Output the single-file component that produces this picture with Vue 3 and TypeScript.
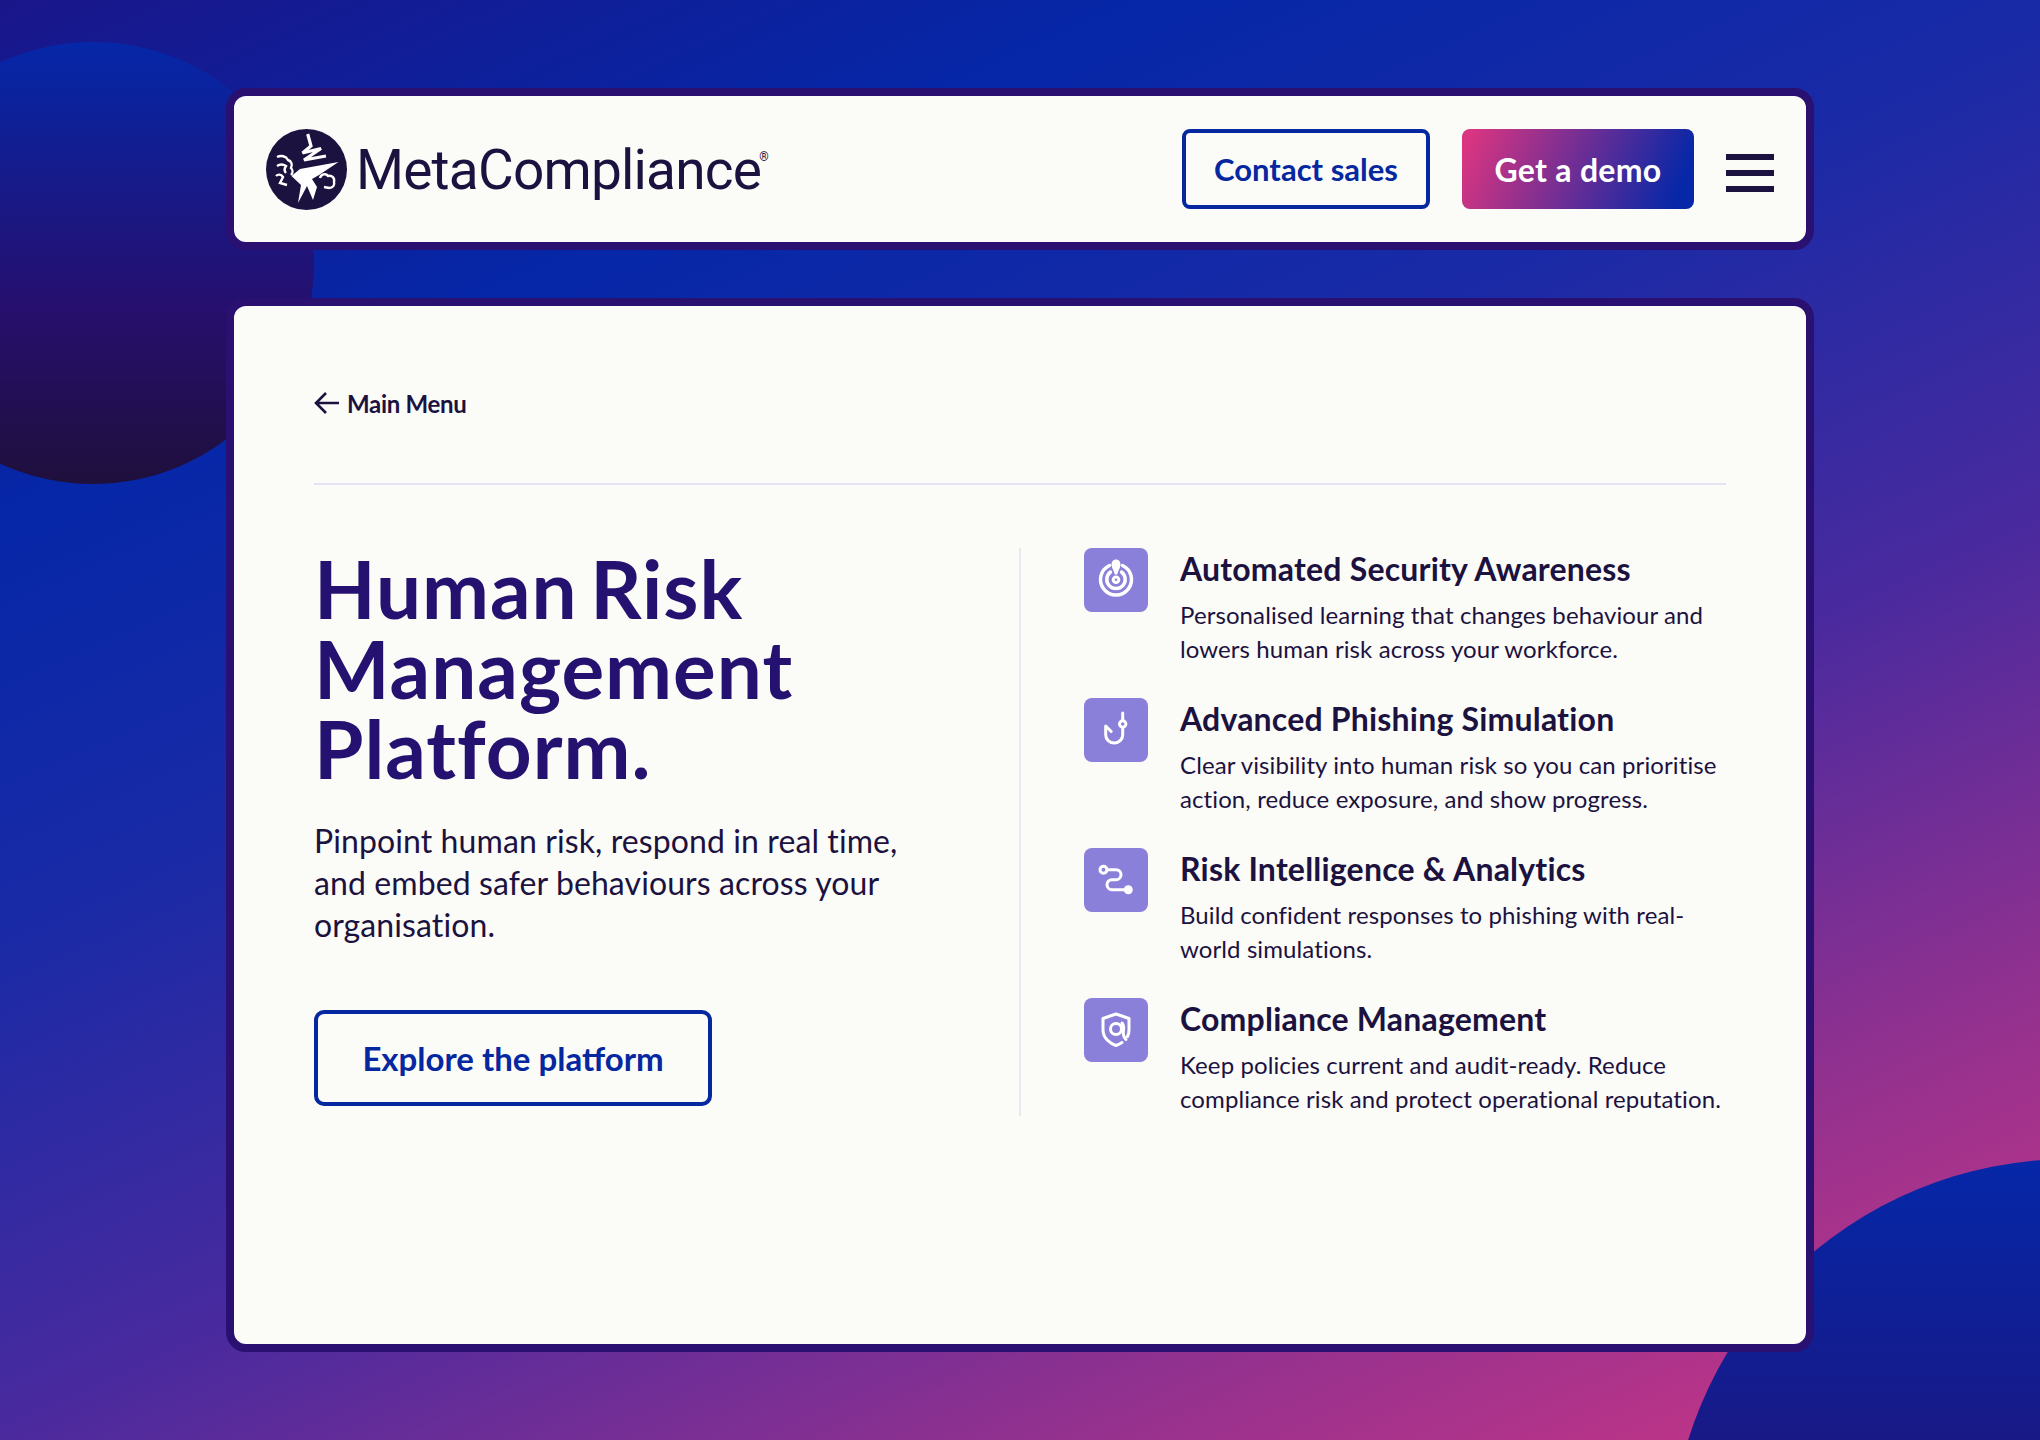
<script setup lang="ts">
interface Feature {
  icon: string;
  title: string;
  text: string;
}

const features: Feature[] = [
  {
    icon: "target",
    title: "Automated Security Awareness",
    text: "Personalised learning that changes behaviour and lowers human risk across your workforce.",
  },
  {
    icon: "hook",
    title: "Advanced Phishing Simulation",
    text: "Clear visibility into human risk so you can prioritise action, reduce exposure, and show progress.",
  },
  {
    icon: "route",
    title: "Risk Intelligence & Analytics",
    text: "Build confident responses to phishing with real-world simulations.",
  },
  {
    icon: "shield",
    title: "Compliance Management",
    text: "Keep policies current and audit-ready. Reduce compliance risk and protect operational reputation.",
  },
];
</script>

<template>
  <div class="page">
    <div class="blob blob-left"></div>
    <div class="blob blob-right"></div>

    <header class="card topbar">
      <div class="logo">
        <svg class="logo-mark" viewBox="0 0 81 81" width="81" height="81">
          <circle cx="40.500" cy="40.500" r="40.500" fill="#1c1240" />
          <path fill="none" stroke="#fff" stroke-width="3.200" d="M41.700 5 45 17 36.500 24 55 19.500 38 31 60 27" />
          <path fill="#fff" d="M72.500 33 34 40 25.500 47 35 56 32 74 41 57 47 71 51 58 46 50 53 46Z" />
          <path
            fill="none"
            stroke="#fff"
            stroke-width="2.400"
            d="M11 28c4-2 9-1 11 3 3 1 5 4 3 8 2 2 2 5 0 7M11 37c3-2 6-2 9 0-2 3-2 5 0 7M10 47c2-2 5-2 7 1l-3 6 7 2M54 49c1-4 6-5 8-2 4-1 7 2 6 6 1 3-1 6-5 6l-5-1"
          />
        </svg>
        <span class="logo-name">MetaCompliance<sup>®</sup></span>
      </div>
      <div class="actions">
        <a class="btn btn-outline btn-contact">Contact sales</a>
        <a class="btn btn-fill">Get a demo</a>
        <div class="burger"><span></span><span></span><span></span></div>
      </div>
    </header>

    <main class="card panel">
      <div class="back">
        <svg viewBox="0 0 26 24" width="26" height="24" fill="none" stroke="#1c1240" stroke-width="2.600">
          <path d="M25 12H2M12 2 2 12l10 10" />
        </svg>
        <span>Main Menu</span>
      </div>

      <div class="columns">
        <section class="intro">
          <h1>Human Risk<br />Management<br />Platform.</h1>
          <p>
            Pinpoint human risk, respond in real time,<br />
            and embed safer behaviours across your<br />
            organisation.
          </p>
          <a class="btn btn-outline btn-explore">Explore the platform</a>
        </section>

        <section class="features">
          <article v-for="item in features" :key="item.icon" class="feature">
            <div class="feature-icon">
              <svg viewBox="0 0 64 64" width="64" height="64" fill="none" stroke="#fff" stroke-width="3" stroke-linecap="round" stroke-linejoin="round">
                <template v-if="item.icon === 'target'">
                  <path d="M25.500 17.500a15.500 15.500 0 1 0 13 0" stroke-width="3.500" />
                  <path d="M26.500 24a9.200 9.200 0 1 0 11 0" stroke-width="3.500" />
                  <circle cx="32" cy="31.700" r="2.800" />
                  <path d="M32 11.500c2.800 0 4.500 2.200 4.500 5 0 3.500-2.500 6-3.300 10h-2.400c-.8-4-3.300-6.500-3.300-10 0-2.800 1.700-5 4.500-5Z" fill="#fff" stroke="none" />
                </template>
                <template v-else-if="item.icon === 'hook'">
                  <path d="M38.700 15V37a8.500 8 0 0 1-17 0v-9l5.500 5.500" />
                  <circle cx="38.700" cy="26" r="3.200" fill="#8b80d9" />
                </template>
                <template v-else-if="item.icon === 'route'">
                  <circle cx="19.500" cy="21.700" r="3.500" />
                  <path d="M23 21.700h9a5 5 0 0 1 0 10h-4a5 5 0 0 0 0 10h12" />
                  <circle cx="44.300" cy="41.700" r="4.500" fill="#fff" stroke="none" />
                </template>
                <template v-else>
                  <path d="M38 44.500c-2 1.300-4 2.300-6 3-6-2-13-7.500-13-15.500V20.500L32 16l13 4.500V32c0 2.500-.5 4.500-1.500 6.500" />
                  <circle cx="32" cy="31" r="5.500" />
                  <path d="M38 25c1.500 2 2 4 1.500 7s-1 6 2.500 9.500" />
                </template>
              </svg>
            </div>
            <div class="feature-body">
              <h3>{{ item.title }}</h3>
              <p>{{ item.text }}</p>
            </div>
          </article>
        </section>
      </div>
    </main>
  </div>
</template>

<style scoped>
.page {
  position: relative;
  width: 2040px;
  height: 1440px;
  overflow: hidden;
  box-sizing: border-box;
  padding-top: 88px;
  display: flex;
  flex-direction: column;
  align-items: center;
  gap: 48px;
  font-family: Lato, "Noto Sans", sans-serif;
  color: #1c1240;
  background: linear-gradient(156deg, #1a168a 0%, #0527a8 22%, #1a2aa6 40%, #4a2a9e 61%, #93318f 81%, #d03684 100%);
}

.blob {
  position: absolute;
  border-radius: 50%;
  background: linear-gradient(180deg, #0527a8 0%, #260f6e 60%, #1f0f3c 100%);
}

.blob-left {
  left: -128px;
  top: 42px;
  width: 442px;
  height: 442px;
}

.blob-right {
  left: 1670px;
  top: 1159px;
  width: 800px;
  height: 800px;
}

.card {
  position: relative;
  width: 1588px;
  box-sizing: border-box;
  background: #fbfbf8;
  border: 8px solid #2a1070;
  border-radius: 20px;
}

.topbar {
  height: 162px;
  padding: 0 32px;
  display: flex;
  align-items: center;
  justify-content: space-between;
}

.logo {
  display: flex;
  align-items: center;
  gap: 9px;
}

.logo-name {
  font-family: Roboto, sans-serif;
  font-size: 55px;
  line-height: 1;
  color: #1c1240;
  letter-spacing: -0.8px;
  margin-top: 3px;
}

.logo-name sup {
  font-size: 12px;
  vertical-align: 28px;
  line-height: 0;
  letter-spacing: 0;
  margin-left: -2px;
}

.actions {
  display: flex;
  align-items: center;
  gap: 32px;
}

.btn {
  box-sizing: border-box;
  display: flex;
  align-items: center;
  justify-content: center;
  font-weight: 700;
  border-radius: 8px;
}

.btn-outline {
  border: 4px solid #0527a0;
  color: #0527a0;
}

.btn-contact {
  width: 248px;
  height: 80px;
  font-size: 31px;
}

.btn-fill {
  width: 232px;
  height: 80px;
  font-size: 32px;
  letter-spacing: 0.3px;
  color: #fff;
  background: linear-gradient(112deg, #d93581 4%, #0527a8 92%);
}

.burger {
  width: 48px;
  display: flex;
  flex-direction: column;
  gap: 10px;
  margin-top: 7px;
}

.burger span {
  height: 6px;
  background: #1c1240;
}

.panel {
  height: 1054px;
  padding: 80px 80px 0;
}

.back {
  display: flex;
  align-items: center;
  gap: 7px;
  height: 34px;
  padding-bottom: 63px;
  border-bottom: 2px solid #e4e4f4;
  font-size: 24px;
  font-weight: 700;
  letter-spacing: -0.3px;
}

.columns {
  display: flex;
  margin-top: 63px;
}

.intro {
  width: 707px;
  height: 568px;
  box-sizing: border-box;
  border-right: 2px solid #e8e8ee;
}

.intro h1 {
  margin: 0;
  font-size: 80px;
  line-height: 80px;
  font-weight: 700;
  letter-spacing: 1px;
  word-spacing: -8px;
  color: #25116f;
}

.intro p {
  margin: 32px 0 64px;
  font-size: 32px;
  line-height: 42px;
  letter-spacing: 0.1px;
}

.btn-explore {
  width: 398px;
  height: 96px;
  font-size: 33px;
  border-radius: 10px;
}

.features {
  margin-left: 63px;
  width: 642px;
  display: flex;
  flex-direction: column;
  gap: 32px;
}

.feature {
  display: flex;
  gap: 32px;
}

.feature-icon {
  flex: none;
  width: 64px;
  height: 64px;
  border-radius: 8px;
  background: #8b80d9;
}

.feature-icon svg {
  display: block;
}

.feature-body h3 {
  margin: 1px 0 9px;
  font-size: 32px;
  line-height: 40px;
  font-weight: 700;
  letter-spacing: 0.2px;
}

.feature-body p {
  margin: 0;
  font-size: 24px;
  line-height: 34px;
  letter-spacing: 0.1px;
}
</style>

<style>
html,
body {
  margin: 0;
}
</style>
